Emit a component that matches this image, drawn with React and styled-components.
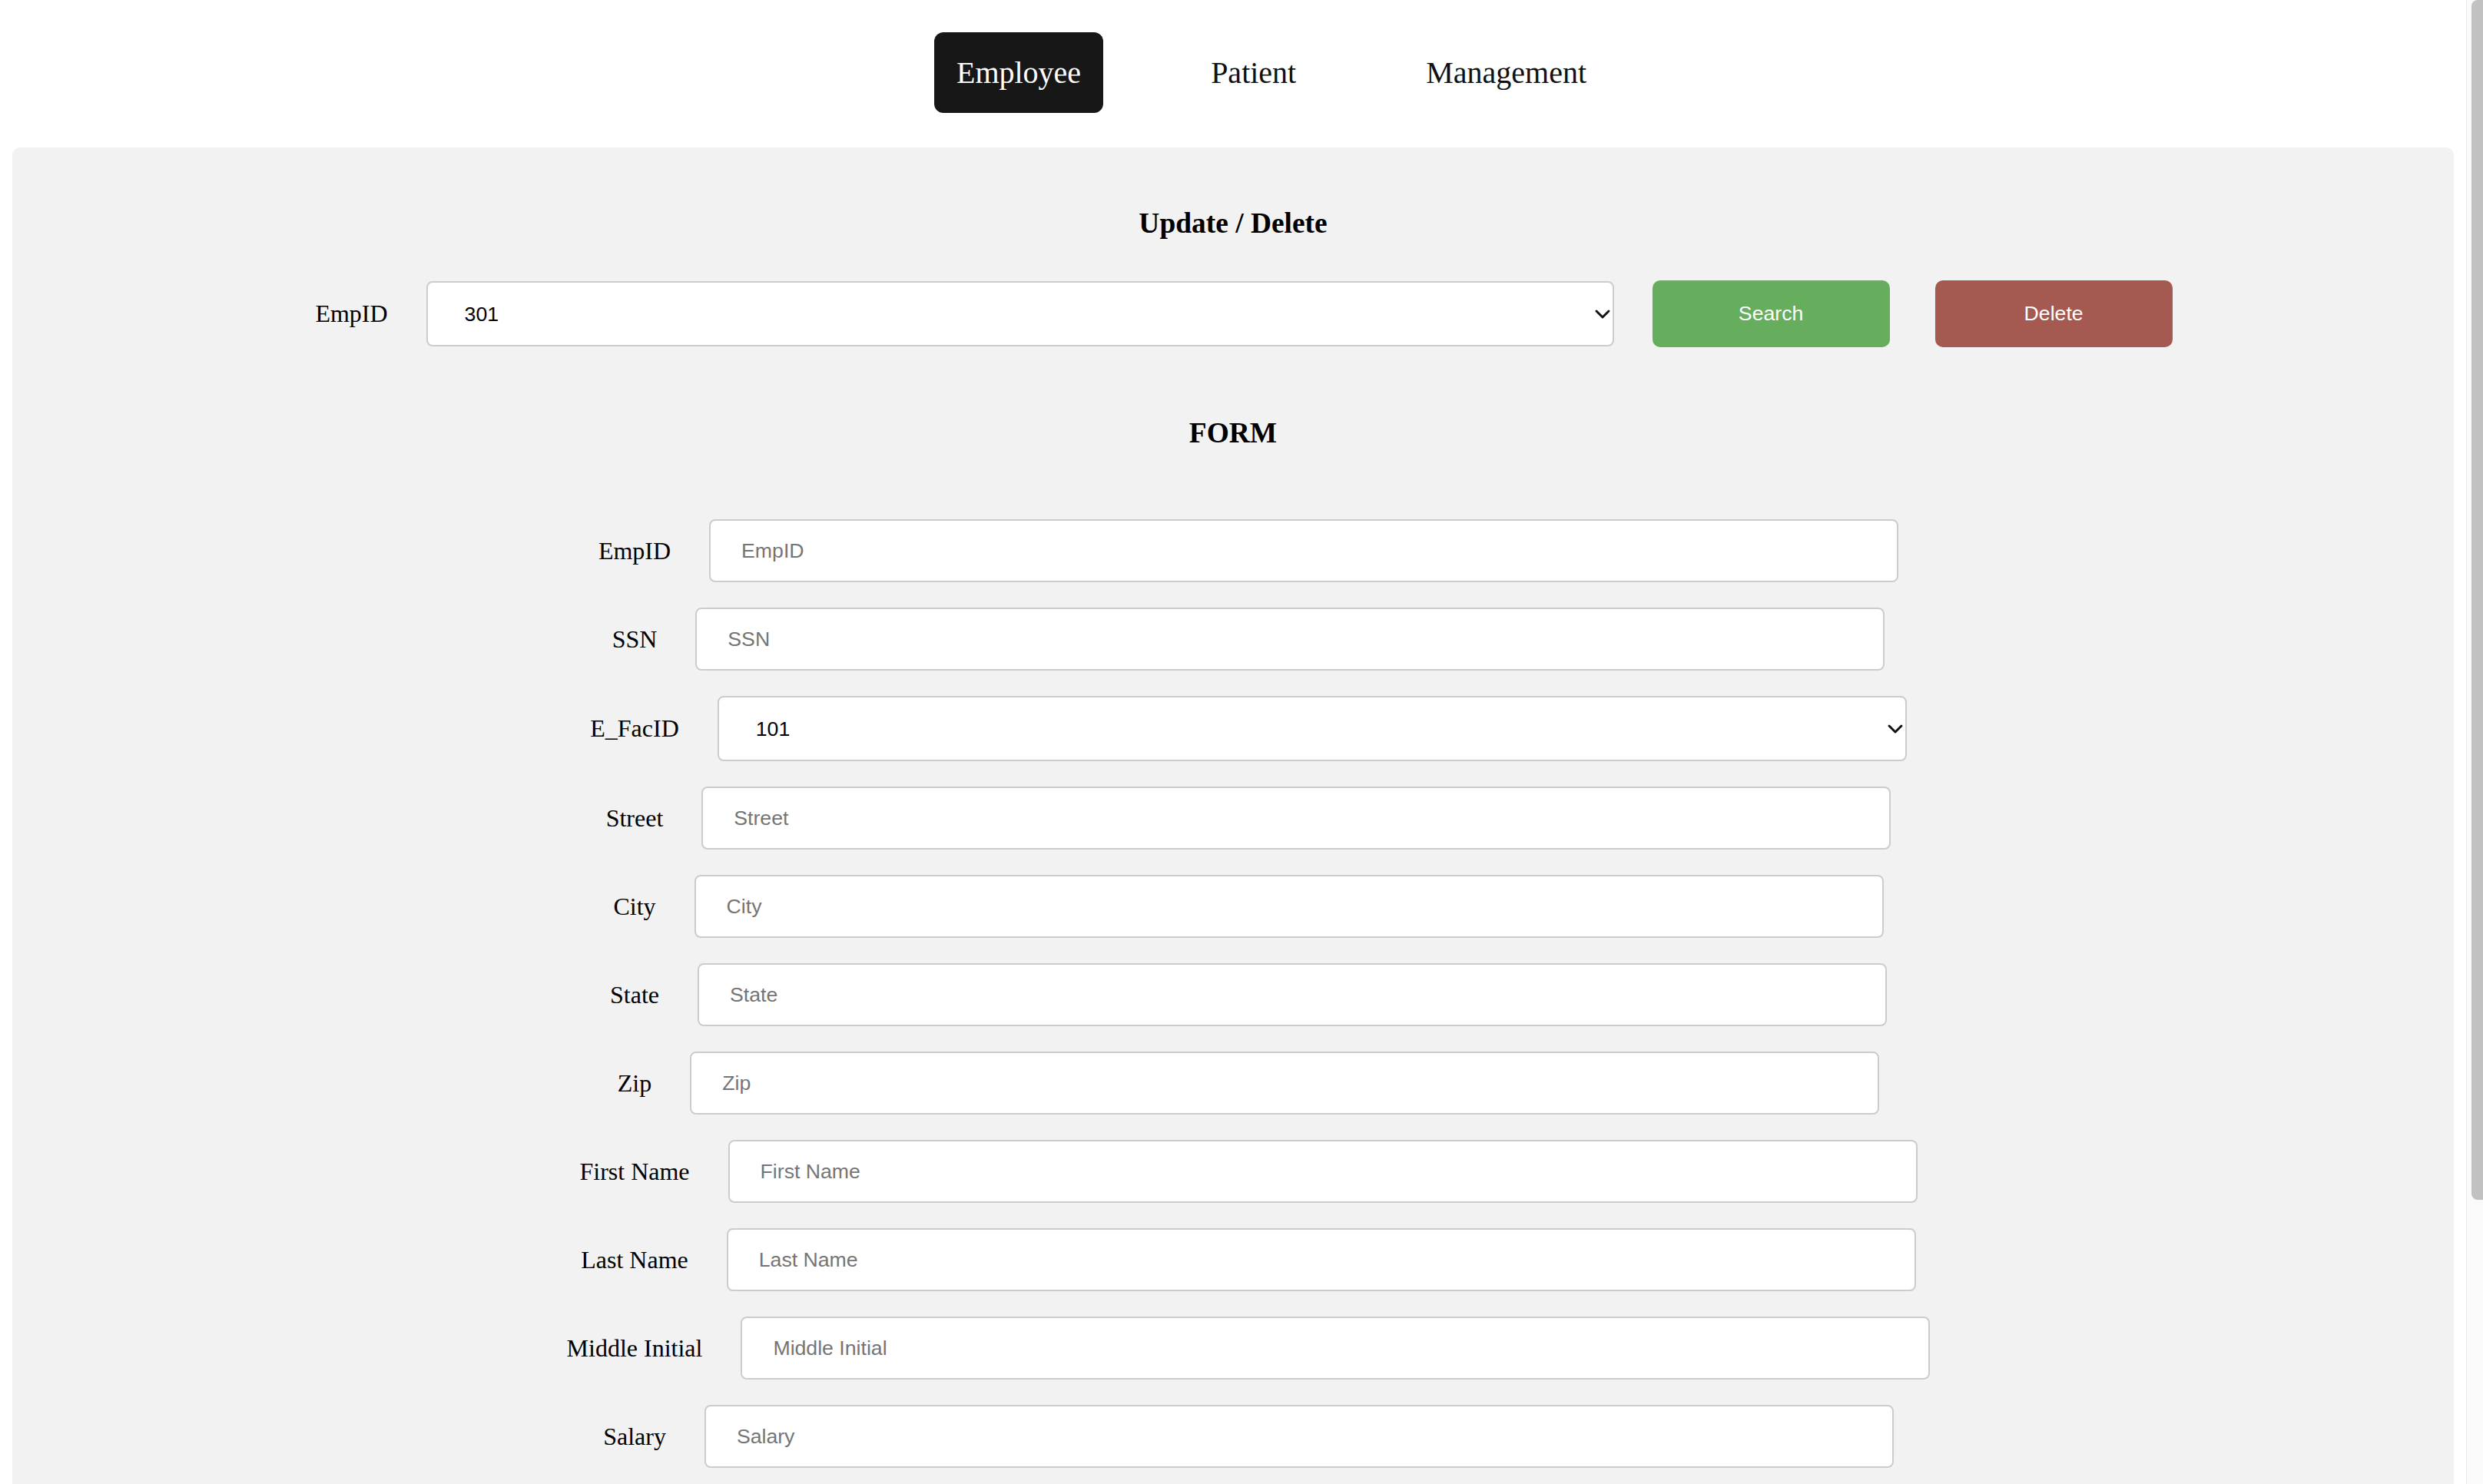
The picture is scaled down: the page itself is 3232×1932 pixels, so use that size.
import React from 'react';
import styled, { createGlobalStyle } from 'styled-components';
import { ChevronDown } from 'lucide-react';

const GlobalStyle = createGlobalStyle`
	html, body {
		margin: 0;
		padding: 0;
		overflow: hidden;
		background: #ffffff;
	}
	* {
		box-sizing: border-box;
	}
`;

const formFields = [
	{ label: 'EmpID', placeholder: 'EmpID' },
	{ label: 'SSN', placeholder: 'SSN' },
	{ label: 'E_FacID', options: ['101', '102', '103'] },
	{ label: 'Street', placeholder: 'Street' },
	{ label: 'City', placeholder: 'City' },
	{ label: 'State', placeholder: 'State' },
	{ label: 'Zip', placeholder: 'Zip' },
	{ label: 'First Name', placeholder: 'First Name' },
	{ label: 'Last Name', placeholder: 'Last Name' },
	{ label: 'Middle Initial', placeholder: 'Middle Initial' },
	{ label: 'Salary', placeholder: 'Salary' },
];

const tabs = ['Employee', 'Patient', 'Management'];

const SelectBox = ({ options, width }) => (
	<SelectWrap $width={width}>
		<Select defaultValue={options[0]}>
			{options.map((o) => (
				<option key={o} value={o}>
					{o}
				</option>
			))}
		</Select>
		<Chevron size={32} strokeWidth={2.2} />
	</SelectWrap>
);

const App = () => {
	return (
		<Screen>
			<GlobalStyle />
			<Page>
				<Nav>
					{tabs.map((t, i) => (
						<NavItem key={t} $active={i === 0}>
							{t}
						</NavItem>
					))}
				</Nav>

				<Panel>
					<Heading>Update / Delete</Heading>
					<SearchRow>
						<SearchLabel>EmpID</SearchLabel>
						<SelectBox options={['301', '302', '303']} width={1546} />
						<ActionButton $color="#67ad5e" $gap={50}>
							Search
						</ActionButton>
						<ActionButton $color="#a45a51" $gap={59}>
							Delete
						</ActionButton>
					</SearchRow>

					<FormHeading>FORM</FormHeading>
					<FieldList>
						{formFields.map((f) => (
							<FieldRow key={f.label}>
								<FieldLabel>{f.label}</FieldLabel>
								{f.options ? (
									<SelectBox options={f.options} width={1548} />
								) : (
									<TextInput placeholder={f.placeholder} />
								)}
							</FieldRow>
						))}
					</FieldList>
				</Panel>
			</Page>
			<ScrollTrack>
				<ScrollThumb />
			</ScrollTrack>
		</Screen>
	);
};

export default App;

const Screen = styled.div`
	display: flex;
	height: 100vh;
	overflow: hidden;
	font-family: 'Liberation Serif', 'Times New Roman', serif;
	color: #000;
`;

const Page = styled.div`
	flex: 1;
	padding: 42px 16px 0 16px;
	overflow: hidden;
`;

const Nav = styled.nav`
	display: flex;
	justify-content: center;
	gap: 111px;
	padding-left: 100px;
`;

const NavItem = styled.div`
	padding: 29px;
	font-size: 40px;
	line-height: 47px;
	border-radius: 12px;
	background: ${(p) => (p.$active ? '#171717' : 'transparent')};
	color: ${(p) => (p.$active ? '#ffffff' : '#111111')};
	cursor: pointer;
`;

const Panel = styled.section`
	margin-top: 45px;
	background: #f2f2f2;
	border-radius: 10px;
	padding: 77px 0 300px 0;
`;

const Heading = styled.h3`
	margin: 0;
	text-align: center;
	font-size: 37.44px;
	line-height: 43px;
	font-weight: bold;
`;

const FormHeading = styled(Heading)`
	margin-top: 90px;
`;

const SearchRow = styled.div`
	margin-top: 53px;
	display: flex;
	justify-content: center;
	align-items: center;
	padding-left: 28px;
`;

const SearchLabel = styled.label`
	font-size: 32px;
	margin-right: 50px;
`;

const SelectWrap = styled.div`
	position: relative;
	width: ${(p) => p.$width}px;
	height: 85px;
	flex-shrink: 0;
`;

const Select = styled.select`
	appearance: none;
	width: 100%;
	height: 100%;
	border: 2px solid #cccccc;
	border-radius: 8px;
	background: #ffffff;
	padding: 0 60px 0 48px;
	font-family: 'Liberation Sans', Arial, sans-serif;
	font-size: 26.67px;
	color: #000;
	outline: none;
`;

const Chevron = styled(ChevronDown)`
	position: absolute;
	right: -1px;
	top: 50%;
	transform: translateY(-50%);
	color: #111;
	pointer-events: none;
`;

const ActionButton = styled.button`
	margin-left: ${(p) => p.$gap}px;
	width: 309px;
	height: 87px;
	border: none;
	border-radius: 10px;
	background: ${(p) => p.$color};
	color: #ffffff;
	font-family: 'Liberation Sans', Arial, sans-serif;
	font-size: 26.67px;
	cursor: pointer;
	flex-shrink: 0;
`;

const FieldList = styled.div`
	margin-top: 91px;
	display: flex;
	flex-direction: column;
	gap: 33px;
	padding-left: 40px;
`;

const FieldRow = styled.div`
	display: flex;
	justify-content: center;
	align-items: center;
`;

const FieldLabel = styled.label`
	font-size: 32px;
	margin-right: 50px;
	white-space: nowrap;
`;

const TextInput = styled.input`
	width: 1548px;
	height: 82px;
	flex-shrink: 0;
	border: 2px solid #cccccc;
	border-radius: 8px;
	background: #ffffff;
	padding: 0 40px;
	font-family: 'Liberation Sans', Arial, sans-serif;
	font-size: 26.67px;
	color: #000;
	outline: none;

	&::placeholder {
		color: #757575;
	}
`;

const ScrollTrack = styled.div`
	width: 22px;
	flex-shrink: 0;
	background: #fafafa;
	border-left: 1px solid #e6e6e6;
	padding: 0 0 0 6px;
`;

const ScrollThumb = styled.div`
	width: 16px;
	height: 1562px;
	background: #c1c1c1;
	border-radius: 8px 0 0 8px;
`;
